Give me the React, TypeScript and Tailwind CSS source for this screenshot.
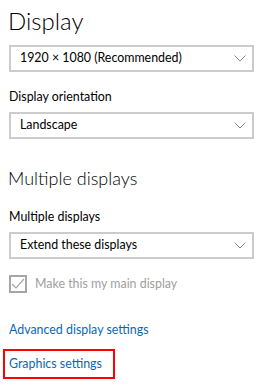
import React from "react";

function Chevron() {
  return (
    <svg width="12" height="7" viewBox="0 0 12 7" className="shrink-0">
      <path d="M0.5 0.5 L6 6 L11.5 0.5" fill="none" stroke="#8a8a8a" strokeWidth="1" />
    </svg>
  );
}

function Select({ label }: { label: string }) {
  return (
    <div className="ml-[9px] w-[245px] h-[27px] border-2 border-[#cccccc] bg-white flex items-center justify-between pl-[9px] pr-[6px]">
      <span className="text-[12.4px] text-black leading-none whitespace-nowrap">{label}</span>
      <Chevron />
    </div>
  );
}

export default function App() {
  return (
    <div
      className="w-[271px] h-[385px] bg-white overflow-hidden flex flex-col"
      style={{ fontFamily: '"Segoe UI", Lato, sans-serif' }}
    >
      <div className="pl-[8px] pt-[6px] text-[24px] font-light text-black leading-[30px]">Display</div>
      <div className="mt-[9px]">
        <Select label="1920 × 1080 (Recommended)" />
      </div>
      <div className="pl-[9px] mt-[16px] text-[12.4px] leading-[18px] text-black">Display orientation</div>
      <div className="mt-[6px]">
        <Select label="Landscape" />
      </div>
      <div className="pl-[8px] mt-[26px] text-[18px] font-light leading-[26px] text-black">Multiple displays</div>
      <div className="pl-[9px] mt-[17px] text-[12.4px] leading-[18px] text-black">Multiple displays</div>
      <div className="mt-[6px]">
        <Select label="Extend these displays" />
      </div>
      <div className="flex items-center pl-[9px] mt-[16px]">
        <div className="w-[18px] h-[18px] border-2 border-[#a6a6a6] flex items-center justify-center">
          <svg width="14" height="12" viewBox="0 0 14 12">
            <path d="M1 6 L5 10 L13 1" fill="none" stroke="#a6a6a6" strokeWidth="1.2" />
          </svg>
        </div>
        <span className="ml-[8px] text-[12.4px] text-[#a0a0a0] leading-[18px] whitespace-nowrap">Make this my main display</span>
      </div>
      <div className="pl-[9px] mt-[28px] text-[12.4px] leading-[18px] text-[#0a68b4] whitespace-nowrap">Advanced display settings</div>
      <div className="ml-[3px] mt-[10px] w-[112px] h-[30px] border-2 border-[#ff0000] flex items-center pl-[4px]">
        <span className="text-[12.4px] leading-[18px] text-[#0a68b4] whitespace-nowrap">Graphics settings</span>
      </div>
    </div>
  );
}
